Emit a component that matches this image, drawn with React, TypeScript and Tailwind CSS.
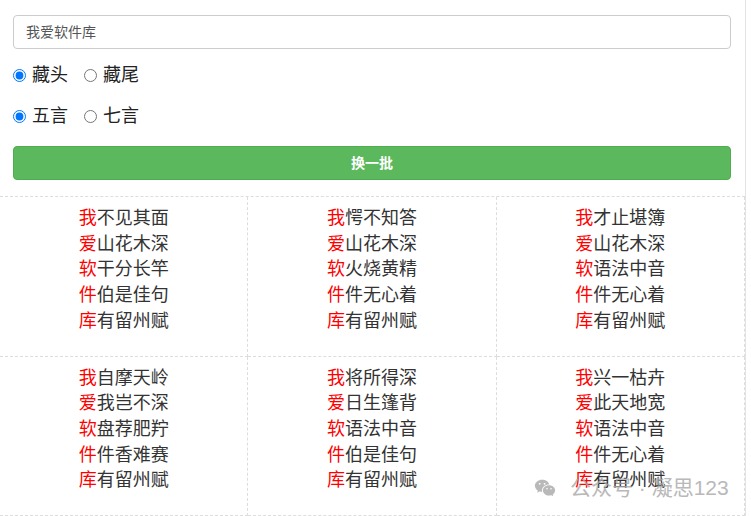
import { useState } from 'react'
import { RiWechatFill } from 'react-icons/ri'

const POEMS = [
  ['我不见其面', '爱山花木深', '软干分长竿', '件伯是佳句', '库有留州赋'],
  ['我愕不知答', '爱山花木深', '软火烧黄精', '件件无心着', '库有留州赋'],
  ['我才止堪簿', '爱山花木深', '软语法中音', '件件无心着', '库有留州赋'],
  ['我自摩天岭', '爱我岂不深', '软盘荐肥羜', '件件香难赛', '库有留州赋'],
  ['我将所得深', '爱日生篷背', '软语法中音', '件伯是佳句', '库有留州赋'],
  ['我兴一枯卉', '爱此天地宽', '软语法中音', '件件无心着', '库有留州赋'],
]

function Radio({ name, label, checked, onChange }: { name: string; label: string; checked: boolean; onChange: () => void }) {
  return (
    <label className="flex items-center gap-[6px]">
      <input type="radio" name={name} checked={checked} onChange={onChange} className="m-0 h-[13px] w-[13px]" />
      <span>{label}</span>
    </label>
  )
}

export default function App() {
  const [mode, setMode] = useState('head')
  const [len, setLen] = useState('five')

  return (
    <div className="relative min-h-[516px] w-[746px] border-r border-[#e3e3e3] bg-white font-['Liberation_Sans','Noto_Sans_CJK_SC',sans-serif] text-[#333]">
      {/* Form */}
      <div className="px-[13px] pt-[15px]">
        <input
          type="text"
          placeholder="我爱软件库"
          className="block h-[34px] w-[718px] rounded-[4px] border border-[#ccc] px-[12px] text-[14px] text-[#555] placeholder:text-[#555] focus:outline-none"
        />

        <div className="mt-[16px] flex h-[20px] items-center gap-[16px] text-[18px] text-[#222]">
          <Radio name="mode" label="藏头" checked={mode === 'head'} onChange={() => setMode('head')} />
          <Radio name="mode" label="藏尾" checked={mode === 'tail'} onChange={() => setMode('tail')} />
        </div>

        <div className="mt-[21px] flex h-[20px] items-center gap-[16px] text-[18px] text-[#222]">
          <Radio name="len" label="五言" checked={len === 'five'} onChange={() => setLen('five')} />
          <Radio name="len" label="七言" checked={len === 'seven'} onChange={() => setLen('seven')} />
        </div>

        <button
          type="button"
          className="mt-[20px] block h-[34px] w-[718px] rounded-[4px] border border-[#4cae4c] bg-[#5cb85c] text-[14px] font-bold text-white"
        >
          换一批
        </button>
      </div>

      {/* Poems */}
      <div className="mt-[16px] grid grid-cols-3 border-t border-dashed border-[#ddd]">
        {POEMS.map((lines, i) => (
          <div key={i} className="h-[159.5px] border-r border-b border-dashed border-[#ddd] pt-[9px] text-center text-[18px] leading-[25.7px]">
            {lines.map((line, j) => (
              <div key={j}>
                <span className="text-[#f00]">{line[0]}</span>
                <span className="text-[#333]">{line.slice(1)}</span>
              </div>
            ))}
          </div>
        ))}
      </div>

      {/* Watermark */}
      <div className="pointer-events-none absolute left-[534px] top-[472px] flex items-center gap-[14px] text-[21px] text-[#a8a8a8] opacity-80">
        <RiWechatFill className="h-[22px] w-[22px]" />
        <span>公众号 · 凝思123</span>
      </div>
    </div>
  )
}
